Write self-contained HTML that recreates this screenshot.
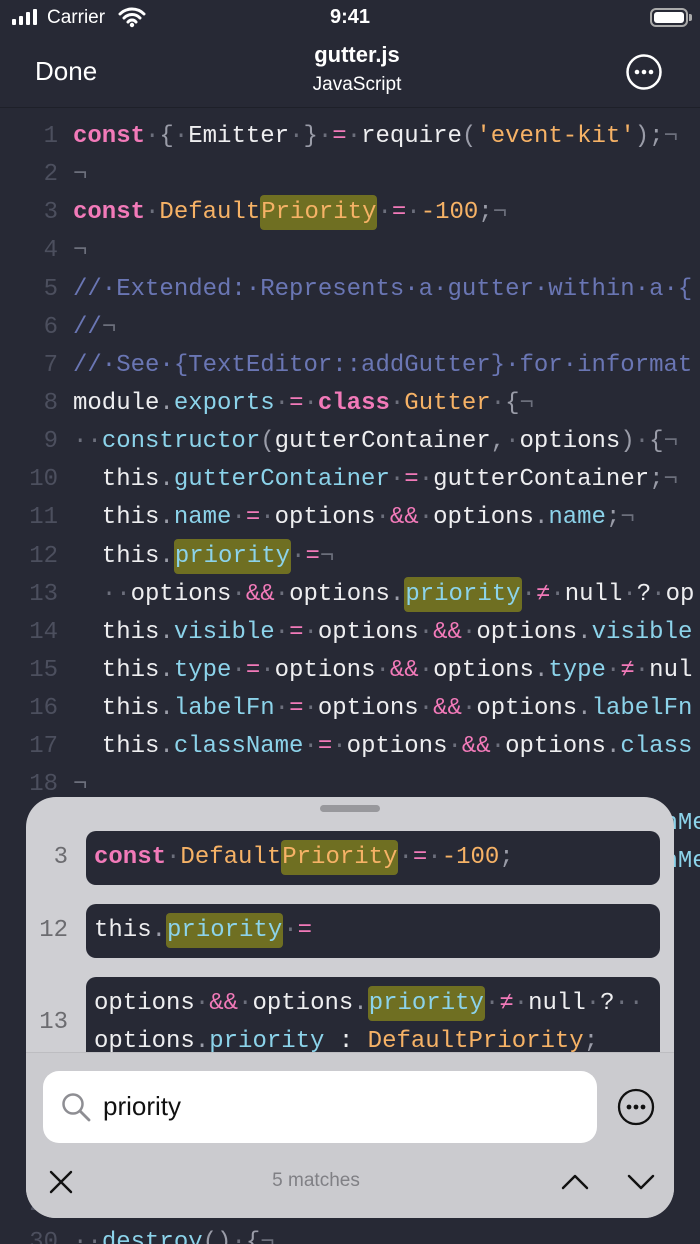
<!DOCTYPE html>
<html><head><meta charset="utf-8"><style>
*{margin:0;padding:0;box-sizing:border-box}
html{width:700px;height:1244px;overflow:hidden}
body{width:700px;height:1244px;overflow:hidden;background:#272935;font-family:"Liberation Sans",sans-serif;position:relative;color:#fff}
.code{position:absolute;left:0;top:118px;width:700px;height:1126px;overflow:hidden;font-family:"Liberation Mono",monospace;font-size:24px;line-height:38.15px;color:#eeeef0}
.code>div{white-space:pre;height:38.15px}
.ln{display:inline-block;width:58px;text-align:right;color:#4c4f5e;margin-right:15px}
.k{color:#f27ab9;font-weight:bold}.kn{color:#f27ab9}.o{color:#f6b266}.c{color:#8cd3ea}.m{color:#6a76b4}.d{color:#6c6f7c}.p{color:#9a9ca8}
.h{background:#6f6f22;border-radius:4px;padding:4px 1px}
.panel{position:absolute;left:26px;top:797px;width:648px;height:421px;background:#cfcfd3;border-radius:30px;overflow:hidden}
.handle{position:absolute;left:294px;top:8px;width:60px;height:7px;border-radius:4px;background:#98989c}
.card{position:absolute;left:60px;width:574px;background:#272935;border-radius:10px;font-family:"Liberation Mono",monospace;font-size:24px;white-space:pre;color:#eeeef0;padding-left:8px;overflow:hidden}
.num{position:absolute;width:42px;text-align:right;font-family:"Liberation Mono",monospace;font-size:24px;color:#6c6c70}
.bottom{position:absolute;left:0;top:255px;width:648px;height:170px;background:#cbcbcf;border-top:1px solid #bdbdc1}
</style></head><body>
<div style="position:absolute;left:12px;top:9px;display:flex;align-items:flex-end;gap:3px">
<div style="width:4px;height:6px;background:#fff;border-radius:1px"></div><div style="width:4px;height:9px;background:#fff;border-radius:1px"></div><div style="width:4px;height:13px;background:#fff;border-radius:1px"></div><div style="width:4px;height:16px;background:#fff;border-radius:1px"></div></div>
<div style="position:absolute;left:47px;top:7px;font-size:19px">Carrier</div>
<svg style="position:absolute;left:118px;top:6px" width="28" height="22" viewBox="0 0 28 22"><path d="M2 8a17 17 0 0 1 24 0M6 12a11 11 0 0 1 16 0M10 16a5 5 0 0 1 8 0" stroke="#fff" stroke-width="3" fill="none" stroke-linecap="round"/><circle cx="14" cy="19" r="2.2" fill="#fff"/></svg>
<div style="position:absolute;left:0;width:700px;text-align:center;top:6px;font-size:20px;font-weight:bold">9:41</div>
<div style="position:absolute;left:650px;top:8px;width:38px;height:19px;border:2px solid #aaa;border-radius:6px;padding:2px"><div style="width:100%;height:100%;background:#fff;border-radius:3px"></div></div>
<div style="position:absolute;left:689px;top:14px;width:3px;height:7px;background:#aaa;border-radius:0 2px 2px 0"></div>
<div style="position:absolute;left:35px;top:56px;font-size:26px">Done</div>
<div style="position:absolute;left:0;width:714px;text-align:center;top:42px;font-size:22px;font-weight:bold">gutter.js</div>
<div style="position:absolute;left:0;width:714px;text-align:center;top:74px;font-size:19px">JavaScript</div>
<svg style="position:absolute;left:625px;top:53px" width="38" height="38"><circle cx="19" cy="19" r="16.5" stroke="#fff" stroke-width="2.5" fill="none"/><circle cx="12" cy="19" r="2.3" fill="#fff"/><circle cx="19" cy="19" r="2.3" fill="#fff"/><circle cx="26" cy="19" r="2.3" fill="#fff"/></svg>
<div style="position:absolute;left:0;top:107px;width:700px;height:1px;background:#1e2029"></div>
<div class="code"><div><span class="ln">1</span><span class="k">const</span><span class="d">·</span><span class="p">{</span><span class="d">·</span>Emitter<span class="d">·</span><span class="p">}</span><span class="d">·</span><span class="kn">=</span><span class="d">·</span>require<span class="p">(</span><span class="o">'event-kit'</span><span class="p">);</span><span class="d">¬</span></div><div><span class="ln">2</span><span class="d">¬</span></div><div><span class="ln">3</span><span class="k">const</span><span class="d">·</span><span class="o">Default<span class="h">Priority</span></span><span class="d">·</span><span class="kn">=</span><span class="d">·</span><span class="o">-100</span><span class="p">;</span><span class="d">¬</span></div><div><span class="ln">4</span><span class="d">¬</span></div><div><span class="ln">5</span><span class="m">//·Extended:·Represents·a·gutter·within·a·{</span></div><div><span class="ln">6</span><span class="m">//</span><span class="d">¬</span></div><div><span class="ln">7</span><span class="m">//·See·{TextEditor::addGutter}·for·informat</span></div><div><span class="ln">8</span>module<span class="p">.</span><span class="c">exports</span><span class="d">·</span><span class="kn">=</span><span class="d">·</span><span class="k">class</span><span class="d">·</span><span class="o">Gutter</span><span class="d">·</span><span class="p">{</span><span class="d">¬</span></div><div><span class="ln">9</span><span class="d">··</span><span class="c">constructor</span><span class="p">(</span>gutterContainer<span class="p">,</span><span class="d">·</span>options<span class="p">)</span><span class="d">·</span><span class="p">{</span><span class="d">¬</span></div><div><span class="ln">10</span>  this<span class="p">.</span><span class="c">gutterContainer</span><span class="d">·</span><span class="kn">=</span><span class="d">·</span>gutterContainer<span class="p">;</span><span class="d">¬</span></div><div><span class="ln">11</span>  this<span class="p">.</span><span class="c">name</span><span class="d">·</span><span class="kn">=</span><span class="d">·</span>options<span class="d">·</span><span class="kn">&amp;&amp;</span><span class="d">·</span>options<span class="p">.</span><span class="c">name</span><span class="p">;</span><span class="d">¬</span></div><div><span class="ln">12</span>  this<span class="p">.</span><span class="c h">priority</span><span class="d">·</span><span class="kn">=</span><span class="d">¬</span></div><div><span class="ln">13</span>  <span class="d">··</span>options<span class="d">·</span><span class="kn">&amp;&amp;</span><span class="d">·</span>options<span class="p">.</span><span class="c h">priority</span><span class="d">·</span><span class="kn">≠</span><span class="d">·</span>null<span class="d">·</span>?<span class="d">·</span>op</div><div><span class="ln">14</span>  this<span class="p">.</span><span class="c">visible</span><span class="d">·</span><span class="kn">=</span><span class="d">·</span>options<span class="d">·</span><span class="kn">&amp;&amp;</span><span class="d">·</span>options<span class="p">.</span><span class="c">visible</span></div><div><span class="ln">15</span>  this<span class="p">.</span><span class="c">type</span><span class="d">·</span><span class="kn">=</span><span class="d">·</span>options<span class="d">·</span><span class="kn">&amp;&amp;</span><span class="d">·</span>options<span class="p">.</span><span class="c">type</span><span class="d">·</span><span class="kn">≠</span><span class="d">·</span>nul</div><div><span class="ln">16</span>  this<span class="p">.</span><span class="c">labelFn</span><span class="d">·</span><span class="kn">=</span><span class="d">·</span>options<span class="d">·</span><span class="kn">&amp;&amp;</span><span class="d">·</span>options<span class="p">.</span><span class="c">labelFn</span></div><div><span class="ln">17</span>  this<span class="p">.</span><span class="c">className</span><span class="d">·</span><span class="kn">=</span><span class="d">·</span>options<span class="d">·</span><span class="kn">&amp;&amp;</span><span class="d">·</span>options<span class="p">.</span><span class="c">class</span></div><div><span class="ln">18</span><span class="d">¬</span></div><div><span class="ln">19</span>                                         <span class="c">hMe</span></div><div><span class="ln">20</span>                                         <span class="c">hMe</span></div><div><span class="ln">21</span></div><div><span class="ln">22</span></div><div><span class="ln">23</span></div><div><span class="ln">24</span></div><div><span class="ln">25</span></div><div><span class="ln">26</span></div><div><span class="ln">27</span></div><div><span class="ln">28</span></div><div><span class="ln">29</span></div><div><span class="ln">30</span><span class="d">··</span><span class="c">destroy</span><span class="p">()</span><span class="d">·</span><span class="p">{</span><span class="d">¬</span></div></div>
<div class="panel">
<div class="handle"></div>
<div class="num" style="left:0;top:47px">3</div>
<div class="card" style="top:34px;height:54px;line-height:54px"><span class="k">const</span><span class="d">·</span><span class="o">Default<span class="h">Priority</span></span><span class="d">·</span><span class="kn">=</span><span class="d">·</span><span class="o">-100</span><span class="p">;</span></div>
<div class="num" style="left:0;top:120px">12</div>
<div class="card" style="top:107px;height:54px;line-height:54px">this<span class="p">.</span><span class="c h">priority</span><span class="d">·</span><span class="kn">=</span></div>
<div class="num" style="left:0;top:212px">13</div>
<div class="card" style="top:180px;height:90px;line-height:38px;padding-top:8px">options<span class="d">·</span><span class="kn">&amp;&amp;</span><span class="d">·</span>options<span class="p">.</span><span class="c h">priority</span><span class="d">·</span><span class="kn">≠</span><span class="d">·</span>null<span class="d">·</span>?<span class="d">··</span>
options<span class="p">.</span><span class="c">priority</span> : <span class="o">DefaultPriority</span><span class="p">;</span></div>
<div class="bottom">
<div style="position:absolute;left:17px;top:18px;width:554px;height:72px;background:#fff;border-radius:16px"></div>
<svg style="position:absolute;left:35px;top:39px" width="32" height="32"><circle cx="12" cy="12" r="9.5" stroke="#8e8e93" stroke-width="2.5" fill="none"/><path d="M19 19l9 9" stroke="#8e8e93" stroke-width="2.8" stroke-linecap="round"/></svg>
<div style="position:absolute;left:77px;top:38px;font-size:26px;color:#111">priority</div>
<svg style="position:absolute;left:591px;top:35px" width="38" height="38"><circle cx="19" cy="19" r="17" stroke="#111" stroke-width="2.3" fill="none"/><circle cx="12" cy="19" r="2.4" fill="#111"/><circle cx="19" cy="19" r="2.4" fill="#111"/><circle cx="26" cy="19" r="2.4" fill="#111"/></svg>
<svg style="position:absolute;left:22px;top:116px" width="26" height="26"><path d="M3 3l20 20M23 3L3 23" stroke="#111" stroke-width="2.4" stroke-linecap="round"/></svg>
<div style="position:absolute;left:0;width:580px;text-align:center;top:117px;font-size:19px;color:#808085">5 matches</div>
<svg style="position:absolute;left:535px;top:119px" width="28" height="20"><path d="M2 16L14 4L26 16" stroke="#111" stroke-width="2.4" fill="none" stroke-linecap="round" stroke-linejoin="round"/></svg>
<svg style="position:absolute;left:601px;top:119px" width="28" height="20"><path d="M2 4L14 16L26 4" stroke="#111" stroke-width="2.4" fill="none" stroke-linecap="round" stroke-linejoin="round"/></svg>
</div>
</div>
</body></html>
